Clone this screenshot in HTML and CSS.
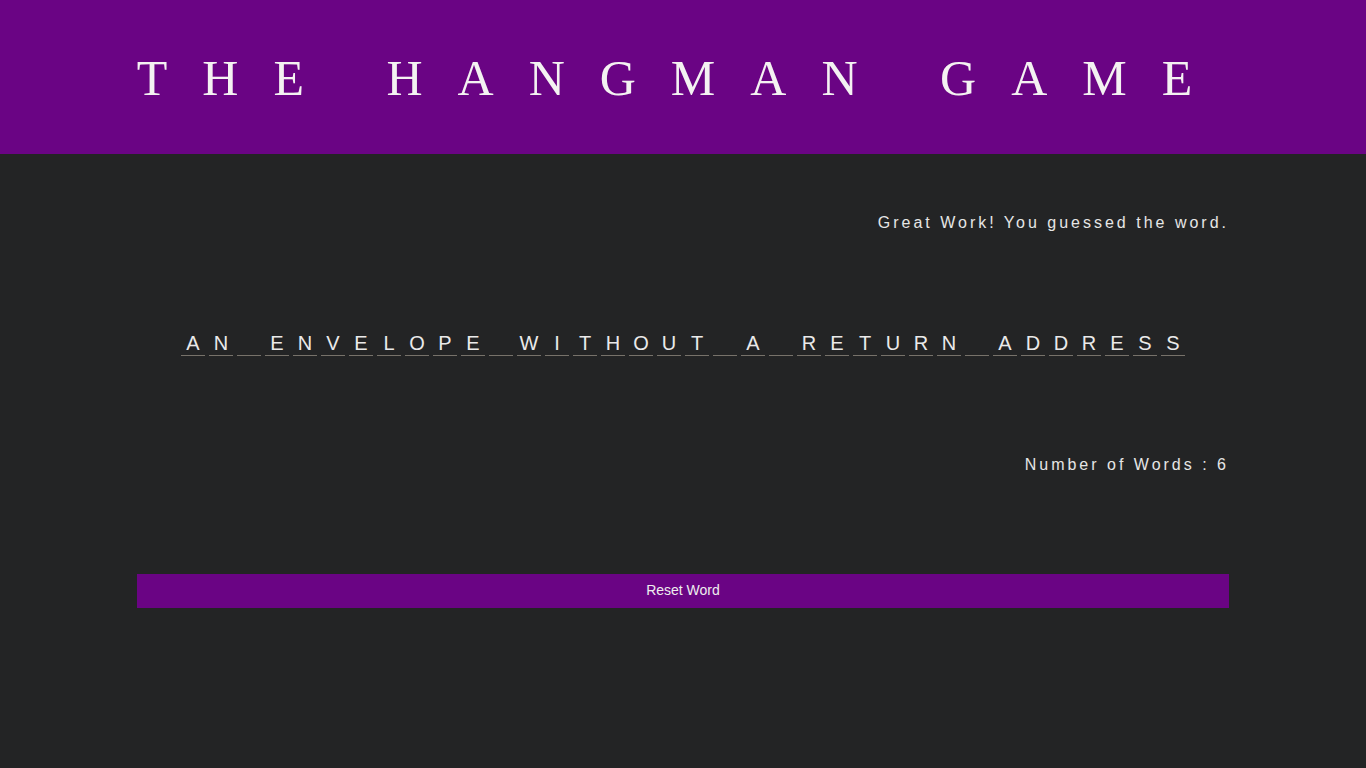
FILE: index.html
```html
<!DOCTYPE html>
<html>
<head>
<meta charset="utf-8">
<title>The Hangman Game</title>
<link rel="stylesheet" href="styles.css">
</head>
<body>
<header class="header">
  <h1 class="title">THE HANGMAN GAME</h1>
</header>
<main class="container">
  <p class="status">Great Work! You guessed the word.</p>
  <div class="word">
    <span class="slot">A</span><span class="slot">N</span><span class="slot"></span><span class="slot">E</span><span class="slot">N</span><span class="slot">V</span><span class="slot">E</span><span class="slot">L</span><span class="slot">O</span><span class="slot">P</span><span class="slot">E</span><span class="slot"></span><span class="slot">W</span><span class="slot">I</span><span class="slot">T</span><span class="slot">H</span><span class="slot">O</span><span class="slot">U</span><span class="slot">T</span><span class="slot"></span><span class="slot">A</span><span class="slot"></span><span class="slot">R</span><span class="slot">E</span><span class="slot">T</span><span class="slot">U</span><span class="slot">R</span><span class="slot">N</span><span class="slot"></span><span class="slot">A</span><span class="slot">D</span><span class="slot">D</span><span class="slot">R</span><span class="slot">E</span><span class="slot">S</span><span class="slot">S</span>
  </div>
  <p class="count">Number of Words : 6</p>
  <button class="reset">Reset Word</button>
</main>
</body>
</html>
```

FILE: styles.css
```css
html, body {
  margin: 0;
  padding: 0;
}
body {
  background: #232425;
  color: #e6e6e6;
  font-family: "Liberation Sans", Arial, sans-serif;
  min-height: 768px;
}
.header {
  background: #6a0484;
  height: 154px;
  display: flex;
  align-items: center;
  justify-content: center;
}
.title {
  margin: 0;
  font-family: "Liberation Serif", "Times New Roman", serif;
  font-weight: normal;
  font-size: 50px;
  letter-spacing: 35px;
  color: #f4f2f2;
  line-height: 1;
  position: relative;
  top: 1px;
  left: -1px;
}
.container {
  width: 1092px;
  margin: 0 auto;
  display: flex;
  flex-direction: column;
}
.status {
  margin: 60px 0 0 0;
  text-align: right;
  font-size: 16px;
  letter-spacing: 3px;
  line-height: 18px;
}
.word {
  margin-top: 99px;
  display: flex;
  justify-content: center;
  gap: 4px;
}
.slot {
  width: 24px;
  height: 24px;
  border-bottom: 1px solid #77726a;
  text-align: center;
  font-size: 20px;
  line-height: 24px;
  color: #eaeaea;
}
.count {
  margin: 100px 0 0 0;
  text-align: right;
  font-size: 16px;
  letter-spacing: 3px;
  line-height: 18px;
}
.reset {
  margin-top: 100px;
  height: 34px;
  background: #6a0484;
  border: none;
  color: #eeeeee;
  font-family: "Liberation Sans", Arial, sans-serif;
  font-size: 14px;
  padding: 0 0 2px;
  cursor: pointer;
}
```
